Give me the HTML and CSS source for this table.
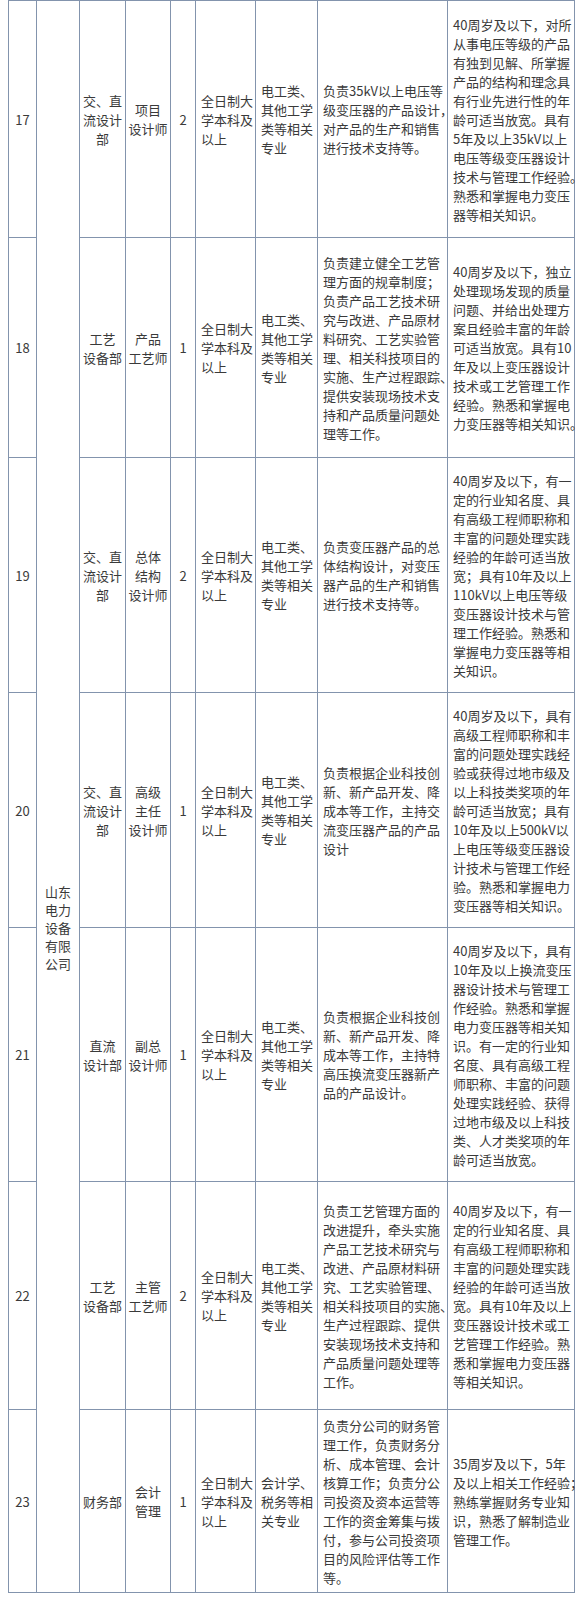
FILE: index.html
```html
<!DOCTYPE html>
<html lang="zh-CN">
<head>
<meta charset="utf-8">
<title>招聘岗位表</title>
<link rel="stylesheet" href="styles.css">
</head>
<body>
<table class="jobs">
  <colgroup>
    <col class="c-no">
    <col class="c-co">
    <col class="c-dept">
    <col class="c-pos">
    <col class="c-num">
    <col class="c-edu">
    <col class="c-major">
    <col class="c-duty">
    <col class="c-req">
  </colgroup>
  <tbody>
    <tr class="r17">
      <td class="ctr">17</td>
      <td class="company" rowspan="7">山东<br>电力<br>设备<br>有限<br>公司</td>
      <td class="ctr">交、直<br>流设计<br>部</td>
      <td class="ctr">项目<br>设计师</td>
      <td class="ctr">2</td>
      <td>全日制大<br>学本科及<br>以上</td>
      <td>电工类、<br>其他工学<br>类等相关<br>专业</td>
      <td>负责35kV以上电压等<br>级变压器的产品设计，<br>对产品的生产和销售<br>进行技术支持等。</td>
      <td>40周岁及以下，对所<br>从事电压等级的产品<br>有独到见解、所掌握<br>产品的结构和理念具<br>有行业先进行性的年<br>龄可适当放宽。具有<br>5年及以上35kV以上<br>电压等级变压器设计<br>技术与管理工作经验。<br>熟悉和掌握电力变压<br>器等相关知识。</td>
    </tr>
    <tr class="r18">
      <td class="ctr">18</td>
      <td class="ctr">工艺<br>设备部</td>
      <td class="ctr">产品<br>工艺师</td>
      <td class="ctr">1</td>
      <td>全日制大<br>学本科及<br>以上</td>
      <td>电工类、<br>其他工学<br>类等相关<br>专业</td>
      <td>负责建立健全工艺管<br>理方面的规章制度；<br>负责产品工艺技术研<br>究与改进、产品原材<br>料研究、工艺实验管<br>理、相关科技项目的<br>实施、生产过程跟踪、<br>提供安装现场技术支<br>持和产品质量问题处<br>理等工作。</td>
      <td>40周岁及以下，独立<br>处理现场发现的质量<br>问题、并给出处理方<br>案且经验丰富的年龄<br>可适当放宽。具有10<br>年及以上变压器设计<br>技术或工艺管理工作<br>经验。熟悉和掌握电<br>力变压器等相关知识。</td>
    </tr>
    <tr class="r19">
      <td class="ctr">19</td>
      <td class="ctr">交、直<br>流设计<br>部</td>
      <td class="ctr">总体<br>结构<br>设计师</td>
      <td class="ctr">2</td>
      <td>全日制大<br>学本科及<br>以上</td>
      <td>电工类、<br>其他工学<br>类等相关<br>专业</td>
      <td>负责变压器产品的总<br>体结构设计，对变压<br>器产品的生产和销售<br>进行技术支持等。</td>
      <td>40周岁及以下，有一<br>定的行业知名度、具<br>有高级工程师职称和<br>丰富的问题处理实践<br>经验的年龄可适当放<br>宽；具有10年及以上<br>110kV以上电压等级<br>变压器设计技术与管<br>理工作经验。熟悉和<br>掌握电力变压器等相<br>关知识。</td>
    </tr>
    <tr class="r20">
      <td class="ctr">20</td>
      <td class="ctr">交、直<br>流设计<br>部</td>
      <td class="ctr">高级<br>主任<br>设计师</td>
      <td class="ctr">1</td>
      <td>全日制大<br>学本科及<br>以上</td>
      <td>电工类、<br>其他工学<br>类等相关<br>专业</td>
      <td>负责根据企业科技创<br>新、新产品开发、降<br>成本等工作，主持交<br>流变压器产品的产品<br>设计</td>
      <td>40周岁及以下，具有<br>高级工程师职称和丰<br>富的问题处理实践经<br>验或获得过地市级及<br>以上科技类奖项的年<br>龄可适当放宽；具有<br>10年及以上500kV以<br>上电压等级变压器设<br>计技术与管理工作经<br>验。熟悉和掌握电力<br>变压器等相关知识。</td>
    </tr>
    <tr class="r21">
      <td class="ctr">21</td>
      <td class="ctr">直流<br>设计部</td>
      <td class="ctr">副总<br>设计师</td>
      <td class="ctr">1</td>
      <td>全日制大<br>学本科及<br>以上</td>
      <td>电工类、<br>其他工学<br>类等相关<br>专业</td>
      <td>负责根据企业科技创<br>新、新产品开发、降<br>成本等工作，主持特<br>高压换流变压器新产<br>品的产品设计。</td>
      <td>40周岁及以下，具有<br>10年及以上换流变压<br>器设计技术与管理工<br>作经验。熟悉和掌握<br>电力变压器等相关知<br>识。有一定的行业知<br>名度、具有高级工程<br>师职称、丰富的问题<br>处理实践经验、获得<br>过地市级及以上科技<br>类、人才类奖项的年<br>龄可适当放宽。</td>
    </tr>
    <tr class="r22">
      <td class="ctr">22</td>
      <td class="ctr">工艺<br>设备部</td>
      <td class="ctr">主管<br>工艺师</td>
      <td class="ctr">2</td>
      <td>全日制大<br>学本科及<br>以上</td>
      <td>电工类、<br>其他工学<br>类等相关<br>专业</td>
      <td>负责工艺管理方面的<br>改进提升，牵头实施<br>产品工艺技术研究与<br>改进、产品原材料研<br>究、工艺实验管理、<br>相关科技项目的实施、<br>生产过程跟踪、提供<br>安装现场技术支持和<br>产品质量问题处理等<br>工作。</td>
      <td>40周岁及以下，有一<br>定的行业知名度、具<br>有高级工程师职称和<br>丰富的问题处理实践<br>经验的年龄可适当放<br>宽。具有10年及以上<br>变压器设计技术或工<br>艺管理工作经验。熟<br>悉和掌握电力变压器<br>等相关知识。</td>
    </tr>
    <tr class="r23">
      <td class="ctr">23</td>
      <td class="ctr">财务部</td>
      <td class="ctr">会计<br>管理</td>
      <td class="ctr">1</td>
      <td>全日制大<br>学本科及<br>以上</td>
      <td>会计学、<br>税务等相<br>关专业</td>
      <td>负责分公司的财务管<br>理工作，负责财务分<br>析、成本管理、会计<br>核算工作；负责分公<br>司投资及资本运营等<br>工作的资金筹集与拨<br>付，参与公司投资项<br>目的风险评估等工作<br>等。</td>
      <td>35周岁及以下，5年<br>及以上相关工作经验；<br>熟练掌握财务专业知<br>识，熟悉了解制造业<br>管理工作。</td>
    </tr>
  </tbody>
</table>
</body>
</html>
```

FILE: styles.css
```css
html, body {
  margin: 0;
  padding: 0;
  background: #ffffff;
}

body {
  font-family: "Noto Sans CJK SC", "Noto Sans", sans-serif;
  color: #3a3a3a;
  font-size: 13px;
  line-height: 19px;
}

.jobs {
  margin-left: 8px;
  border-collapse: collapse;
  table-layout: fixed;
  width: 567px;
}

.jobs td {
  border: 1px solid #8394ad;
  padding: 0 0 0 5px;
  vertical-align: middle;
  white-space: nowrap;
  text-align: left;
  overflow: visible;
}

.jobs td.ctr {
  text-align: center;
  padding: 0;
}

.jobs td.company {
  text-align: center;
  padding: 262px 0 0 0;
  line-height: 18px;
  vertical-align: middle;
}

.c-no { width: 28px; }
.c-co { width: 43px; }
.c-dept { width: 46px; }
.c-pos { width: 45px; }
.c-num { width: 25px; }
.c-edu { width: 60px; }
.c-major { width: 62px; }
.c-duty { width: 130px; }
.c-req { width: 127px; }

.r17 { height: 237px; }
.r18 { height: 220px; }
.r19 { height: 235px; }
.r20 { height: 235px; }
.r21 { height: 254px; }
.r22 { height: 228px; }
.r23 { height: 183px; }
```
